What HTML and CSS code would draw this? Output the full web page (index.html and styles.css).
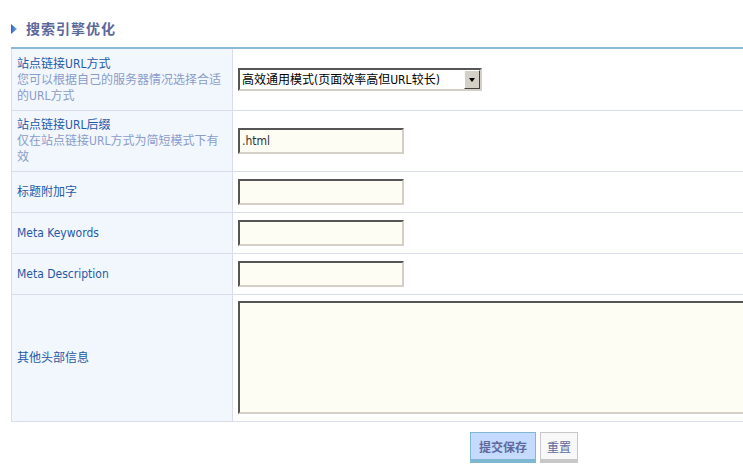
FILE: index.html
```html
<!DOCTYPE html>
<html lang="zh-CN">
<head>
<meta charset="utf-8">
<title>搜索引擎优化</title>
<link rel="stylesheet" href="styles.css">
</head>
<body>
<div class="wrap">
  <h2 class="title">
    <svg class="tri" width="6" height="10" viewBox="0 0 6 10" aria-hidden="true">
      <defs>
        <linearGradient id="tg" x1="0" y1="0" x2="1" y2="0">
          <stop offset="0" stop-color="#2f62c0"/>
          <stop offset="1" stop-color="#7fa8e8"/>
        </linearGradient>
      </defs>
      <polygon points="0,0 6,5 0,10" fill="url(#tg)"/>
    </svg>
    <span>搜索引擎优化</span>
  </h2>
  <table class="form">
    <tr class="r-tall">
      <td class="label first">
        <div class="name">站点链接URL方式</div>
        <div class="desc">您可以根据自己的服务器情况选择合适的URL方式</div>
      </td>
      <td class="field">
        <div class="select">
          <select>
            <option>高效通用模式(页面效率高但URL较长)</option>
            <option>简短模式</option>
          </select>
          <span class="arrow"><i></i></span>
        </div>
      </td>
    </tr>
    <tr class="r-tall">
      <td class="label">
        <div class="name">站点链接URL后缀</div>
        <div class="desc">仅在站点链接URL方式为简短模式下有效</div>
      </td>
      <td class="field"><input class="text" type="text" value=".html"></td>
    </tr>
    <tr>
      <td class="label single"><div class="name">标题附加字</div></td>
      <td class="field"><input class="text" type="text"></td>
    </tr>
    <tr>
      <td class="label single"><div class="name">Meta Keywords</div></td>
      <td class="field"><input class="text" type="text"></td>
    </tr>
    <tr>
      <td class="label single"><div class="name">Meta Description</div></td>
      <td class="field"><input class="text" type="text"></td>
    </tr>
    <tr>
      <td class="label single"><div class="name">其他头部信息</div></td>
      <td class="field area"><textarea class="textarea"></textarea></td>
    </tr>
  </table>
  <div class="actions">
    <button class="btn btn-primary" type="submit">提交保存</button>
    <button class="btn btn-default" type="reset">重置</button>
  </div>
</div>
</body>
</html>
```

FILE: styles.css
```css
html, body {
  margin: 0;
  padding: 0;
  background: #ffffff;
  overflow: hidden;
}

body {
  font-family: "DejaVu Sans Condensed", "DejaVu Sans", "Noto Sans CJK SC", sans-serif;
  font-size: 12px;
  line-height: 16px;
  color: #000;
}

.wrap {
  padding-left: 11px;
  width: 1100px;
}

.title {
  display: flex;
  align-items: center;
  gap: 9px;
  height: 20px;
  margin: 0 0 8px 0;
  padding-top: 19px;
  font-size: 14px;
  font-weight: bold;
  letter-spacing: 1px;
  color: #5a689c;
}

.tri {
  display: block;
  flex: none;
}

.form {
  border-collapse: collapse;
  width: 1000px;
  border-top: 2px solid #8bb9d6;
}

.form td {
  border: 1px solid #d8dde9;
  padding: 6px 5px;
  vertical-align: middle;
}

.form tr:first-child td {
  border-top: 2px solid #8bb9d6;
}

.label {
  width: 210px;
  background: #f2f7fe;
}

.label.first {
  padding-top: 7px;
}

.label.single {
  padding-top: 12px;
  padding-bottom: 12px;
}

.name {
  color: #1f5aa6;
}

.desc {
  color: #8a9cc8;
}

.field {
  background: #ffffff;
}

.field.area {
  padding-top: 6px;
  padding-bottom: 7px;
}

.select {
  position: relative;
  width: 244px;
  height: 23px;
  box-sizing: border-box;
  border: 2px solid;
  border-color: #555555 #d4d0c8 #d4d0c8 #555555;
  background: #ffffff;
}

.select select {
  -webkit-appearance: none;
  appearance: none;
  display: block;
  width: 100%;
  height: 100%;
  border: 0;
  margin: 0;
  padding: 0 0 0 2px;
  background: transparent;
  font: inherit;
  color: #000;
  outline: none;
}

.arrow {
  position: absolute;
  right: 0;
  top: 0;
  width: 16px;
  height: 19px;
  box-sizing: border-box;
  background: #d4d0c8;
  border: 1px solid;
  border-color: #ffffff #404040 #404040 #ffffff;
  display: flex;
  align-items: center;
  justify-content: center;
  pointer-events: none;
}

.arrow i {
  display: block;
  width: 0;
  height: 0;
  border-left: 3.5px solid transparent;
  border-right: 3.5px solid transparent;
  border-top: 4px solid #000;
}

.text,
.textarea {
  display: block;
  box-sizing: border-box;
  border: 2px solid;
  border-color: #555555 #d4d0c8 #d4d0c8 #555555;
  background: #fdfdf3;
  font: inherit;
  color: #333;
  margin: 0;
  outline: none;
}

.text {
  width: 166px;
  height: 26px;
  padding: 0 2px;
}

.textarea {
  width: 620px;
  height: 113px;
  padding: 2px;
  resize: none;
}

.actions {
  display: flex;
  gap: 4px;
  padding: 10px 0 0 459px;
}

.btn {
  height: 31px;
  box-sizing: border-box;
  margin: 0;
  padding: 0;
  font-family: "Noto Sans CJK SC", sans-serif;
  font-size: 12px;
  color: #5e6a9e;
  border: 1px solid;
  border-bottom-width: 4px;
  cursor: pointer;
}

.btn-primary {
  width: 66px;
  background: #c4daff;
  border-color: #7fb6d2;
  font-weight: bold;
}

.btn-default {
  width: 38px;
  background: #f8f8f8;
  border-color: #c8c8c8;
}
```
